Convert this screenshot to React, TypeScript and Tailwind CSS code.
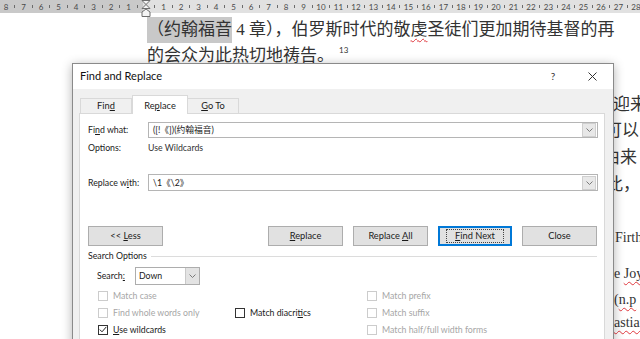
import React from 'react'

const leftNums = [8, 7, 6, 5, 4, 3, 2, 1]
const rightNums = Array.from({ length: 28 }, (_, i) => i + 1)

function Cell({ children }: { children?: React.ReactNode }) {
  return <div className="flex-none w-[8.75px] flex justify-center items-center">{children}</div>
}

function Tick() {
  return <span className="block w-px h-[3px] bg-[#6b6b6b]" />
}

function Ruler() {
  return (
    <div className="h-[13px] bg-[linear-gradient(to_right,#c9c9c9_143px,#e1e1e1_143px)] flex items-center overflow-hidden font-['Lato',sans-serif] text-[8px] leading-none text-[#4a4a4a]">
      <div className="flex ml-[1.6px]">
        {leftNums.map((n) => (
          <React.Fragment key={'l' + n}>
            <Cell>{n}</Cell>
            <Cell><Tick /></Cell>
          </React.Fragment>
        ))}
        <Cell />
        {rightNums.map((n) => (
          <React.Fragment key={'r' + n}>
            <Cell><Tick /></Cell>
            <Cell>{n}</Cell>
          </React.Fragment>
        ))}
      </div>
    </div>
  )
}

function IndentMarker() {
  return (
    <svg className="absolute left-[141px] top-0" width="10" height="17" viewBox="0 0 10 17">
      <path d="M1 0.5 L9 0.5 L5 4.5 Z M5 4.5 L9 8.5 L1 8.5 Z" fill="#f4f4f4" stroke="#6d6d6d" strokeWidth="1" />
      <path d="M1 16.5 L1 12 L5 9 L9 12 L9 16.5 Z" fill="#f4f4f4" stroke="#6d6d6d" strokeWidth="1" />
    </svg>
  )
}

function Wavy({ children }: { children: React.ReactNode }) {
  return <span className="underline decoration-wavy decoration-[#e0383e] decoration-1 underline-offset-[3px]">{children}</span>
}

function Doc() {
  return (
    <div className="font-['Liberation_Serif','Noto_Sans_CJK_SC',serif] text-[#333333]">
      <div className="mt-[4px] pl-[147px] h-[26px] leading-[26px] text-[17px] whitespace-nowrap">
        <span className="inline-block align-top bg-[#c8c8c8]">（约翰福音</span> 4 章），伯罗斯时代的敬<Wavy>虔</Wavy>圣徒们更加期待基督的再
      </div>
      <div className="pl-[147px] h-[26px] leading-[26px] text-[17px] whitespace-nowrap">
        的会众为此热切地祷告。<span className="relative -top-[8px] ml-[5px] text-[8px] font-['Lato',sans-serif]">13</span>
      </div>
      <div className="mt-[23px] pl-[613px] h-[26px] leading-[26px] text-[17px] whitespace-nowrap">迎来</div>
      <div className="pl-[605px] h-[26px] leading-[26px] text-[17px] whitespace-nowrap">可以</div>
      <div className="mt-[1px] pl-[603px] h-[26px] leading-[26px] text-[17px] whitespace-nowrap">由来</div>
      <div className="mt-[1px] pl-[606px] h-[26px] leading-[26px] text-[17px] whitespace-nowrap">此，</div>
      <div className="mt-[30px] pl-[615px] h-[20px] leading-[20px] text-[14px] whitespace-nowrap">Firth</div>
      <div className="mt-[16px] pl-[614px] h-[20px] leading-[20px] text-[14px] whitespace-nowrap">e <Wavy>Joy</Wavy></div>
      <div className="mt-[6px] pl-[614px] h-[20px] leading-[20px] text-[14px] whitespace-nowrap"> (<Wavy>n.p</Wavy></div>
      <div className="mt-[3px] pl-[607px] h-[20px] leading-[20px] text-[14px] whitespace-nowrap"><Wavy>bastian</Wavy></div>
    </div>
  )
}

function Chevron() {
  return (
    <svg width="7" height="4" viewBox="0 0 7 4">
      <path d="M0.5 0.5 L3.5 3.5 L6.5 0.5" fill="none" stroke="#7a7a7a" strokeWidth="1" />
    </svg>
  )
}

function ComboInput({ value }: { value: string }) {
  return (
    <div className="flex-1 h-full bg-white border border-[#b5b5b5] flex items-center">
      <span className="flex-1 pl-[4px] font-['Lato','Noto_Sans_CJK_SC',sans-serif] text-[8.75px] text-[#1a1a1a] whitespace-nowrap">{value}</span>
      <span className="w-[14px] h-[14px] mr-px bg-[#e8e8e8] border border-[#cfcfcf] flex items-center justify-center">
        <Chevron />
      </span>
    </div>
  )
}

function Btn({ children, primary }: { children: React.ReactNode; primary?: boolean }) {
  return (
    <div
      className={
        primary
          ? 'w-[74px] h-[20px] bg-[#e1e1e1] border border-[#0078d7] shadow-[inset_0_0_0_1px_#0078d7] flex items-center justify-center'
          : 'w-[75px] h-[20px] bg-[#e1e1e1] border border-[#adadad] flex items-center justify-center'
      }
    >
      {primary ? (
        <span className="border border-dotted border-[#444] px-[8px] leading-[12px]">{children}</span>
      ) : (
        <span>{children}</span>
      )}
    </div>
  )
}

function Check({ label, disabled, checked }: { label: React.ReactNode; disabled?: boolean; checked?: boolean }) {
  return (
    <div className="flex items-center gap-[5px] h-[17px]">
      <span
        className={
          disabled
            ? 'w-[10px] h-[10px] border border-[#cccccc] bg-white flex items-center justify-center'
            : 'w-[10px] h-[10px] border border-[#333333] bg-white flex items-center justify-center'
        }
      >
        {checked && (
          <svg width="8" height="7" viewBox="0 0 8 7">
            <path d="M0.8 3.6 L3 5.8 L7.3 0.9" fill="none" stroke="#222" strokeWidth="1" />
          </svg>
        )}
      </span>
      <span className={disabled ? 'text-[#a6a6a6]' : 'text-[#1a1a1a]'}>{label}</span>
    </div>
  )
}

function Dialog() {
  return (
    <div className="absolute left-[72px] top-[63px] w-[542px] h-[300px] border border-[#8a8a8a] bg-[#f0f0f0] shadow-[0_2px_10px_rgba(0,0,0,0.3)] flex flex-col font-['Lato','Noto_Sans_CJK_SC',sans-serif] text-[8.75px] text-[#1a1a1a]">
      {/* title bar */}
      <div className="h-[25px] bg-white flex items-center pl-[7px]">
        <span className="text-[11px] text-[#111]">Find and Replace</span>
        <span className="ml-auto w-[20px] text-center text-[10px] text-[#333]">?</span>
        <span className="ml-[19px] mr-[11px] w-[20px] flex justify-center">
          <svg width="9" height="9" viewBox="0 0 9 9">
            <path d="M0.5 0.5 L8.5 8.5 M8.5 0.5 L0.5 8.5" stroke="#333" strokeWidth="1" />
          </svg>
        </span>
      </div>

      <div className="flex-1 pl-[6px] pr-[8px] pt-[6px] flex flex-col">
        {/* tabs */}
        <div className="h-[18px] flex items-end pl-px text-[9.25px]">
          <div className="w-[52px] h-[15px] border border-b-0 border-[#d9d9d9] bg-[#f0f0f0] flex items-center justify-center">
            <span>Fin<u>d</u></span>
          </div>
          <div className="relative z-10 -mb-px w-[56px] h-[19px] border border-b-0 border-[#d9d9d9] bg-white flex items-center justify-center pt-px">
            <span>Re<u>p</u>lace</span>
          </div>
          <div className="w-[51px] h-[15px] border border-b-0 border-l-0 border-[#d9d9d9] bg-[#f0f0f0] flex items-center justify-center">
            <span><u>G</u>o To</span>
          </div>
        </div>

        {/* panel */}
        <div className="flex-1 bg-white border border-[#d9d9d9] flex flex-col">
          <div className="mt-[8px] h-[16px] flex items-center pl-[8px] pr-[6px]">
            <span className="w-[60px]">Fi<u>n</u>d what:</span>
            <ComboInput value="([!《])(约翰福音)" />
          </div>
          <div className="mt-[3px] h-[14px] flex items-center pl-[8px]">
            <span className="w-[60px]">Options:</span>
            <span className="text-[#333]">Use Wildcards</span>
          </div>
          <div className="mt-[19px] h-[17px] flex items-center pl-[8px] pr-[6px]">
            <span className="w-[60px]">Replace w<u>i</u>th:</span>
            <ComboInput value="\1《\2》" />
          </div>

          {/* buttons */}
          <div className="mt-[35px] h-[20px] flex items-center pl-[8px] pr-[7px] text-[9.25px]">
            <Btn>&lt;&lt; <u>L</u>ess</Btn>
            <div className="ml-auto flex gap-[10px]">
              <Btn><u>R</u>eplace</Btn>
              <Btn>Replace <u>A</u>ll</Btn>
              <Btn primary><u>F</u>ind Next</Btn>
              <Btn>Close</Btn>
            </div>
          </div>

          {/* search options */}
          <div className="mt-[4px] h-[12px] flex items-center pl-[8px] pr-[7px]">
            <span>Search Options</span>
            <span className="flex-1 ml-[4px] h-px bg-[#dcdcdc]" />
          </div>
          <div className="mt-[5px] h-[18px] flex items-center pl-[17px]">
            <span className="w-[38px]">Search<u>:</u></span>
            <div className="w-[65px] h-full border border-[#adadad] bg-white flex items-center">
              <span className="flex-1 pl-[3px]">Down</span>
              <span className="w-[14px] h-full bg-[#e3e3e3] border-l border-[#c9c9c9] flex items-center justify-center">
                <Chevron />
              </span>
            </div>
          </div>

          <div className="mt-[2px] pl-[18px] grid grid-cols-[137px_132px_1fr]">
            <Check label="Match case" disabled />
            <div />
            <Check label="Match prefix" disabled />
            <Check label="Find whole words only" disabled />
            <Check label={<>Match diacri<u>t</u>ics</>} />
            <Check label="Match suffix" disabled />
            <Check label={<><u>U</u>se wildcards</>} checked />
            <div />
            <Check label="Match half/full width forms" disabled />
          </div>
        </div>
      </div>
    </div>
  )
}

export default function App() {
  return (
    <div className="relative w-[640px] h-[339px] overflow-hidden bg-white">
      <Ruler />
      <IndentMarker />
      <Doc />
      <Dialog />
    </div>
  )
}
